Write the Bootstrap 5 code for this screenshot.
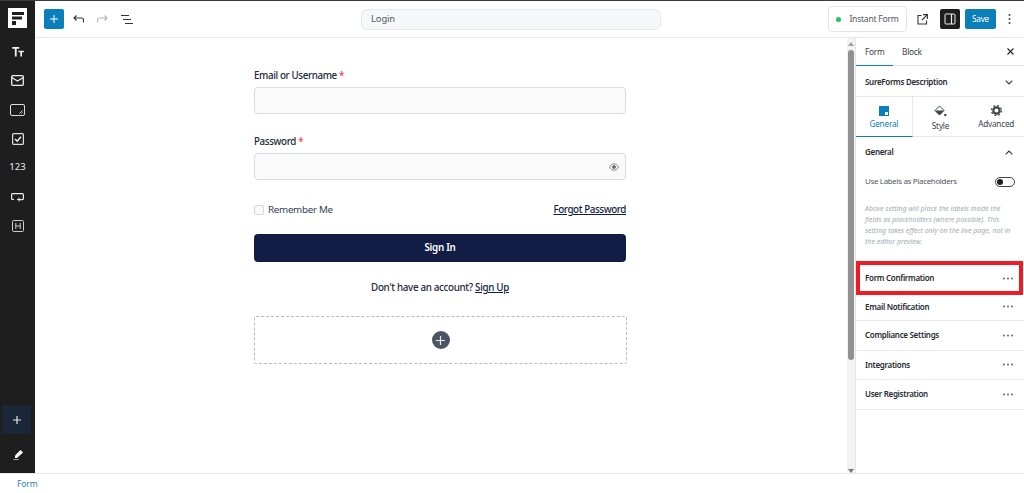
<!DOCTYPE html>
<html lang="en"><head><meta charset="utf-8"><title>Login</title>
<link href="https://cdn.jsdelivr.net/npm/bootstrap@5.3.0/dist/css/bootstrap.min.css" rel="stylesheet">
<style>
html,body{height:100%;overflow:hidden}
body{font-family:"Noto Sans","Open Sans",sans-serif;color:#1e1e1e;background:#fff;border-top:1px solid #3c3c3c}
.app{height:472px}
.rail{width:35px;background:#1e1e1e;color:#e8e8e8;flex:none;padding-top:7px}
.logo{width:19px;height:20px;background:#fff;margin-bottom:9px}
.rail-ic{height:29px;width:35px}
.rail-num{font-size:9.5px;font-weight:500;color:#ddd}
.rail-add{width:29px;height:29px;background:#1a2739;margin:0 4px 7px 2px}
.rail-pen{height:28px;margin-bottom:4px}
.topbar{height:37px;border-bottom:1px solid #e8e8e8;padding:0 10px 0 9px}
.ins{width:20px;height:20px;background:#0a7fb9;border-radius:2px}
.title-box{width:300px;height:21px;background:#f6f7f9;border:1px solid #e6e8ec;border-radius:6px;font-size:9.4px;letter-spacing:-.1px;padding-left:9px;color:#50575e;margin-left:228px;margin-right:167px}
.instant{width:79px;height:26px;border:1px solid #e4e4e7;border-radius:4px;font-size:8.6px;letter-spacing:-.25px;color:#50575e}
.dot{width:5px;height:5px;border-radius:50%;background:#22c55e}
.side-btn{width:20px;height:20px;background:#1e1e1e;border-radius:2px}
.save{width:31px;height:20px;background:#0a7fb9;color:#fff;font-size:8.2px;letter-spacing:-.2px;border-radius:2px}
.canvas-col{width:812px;flex:none}
.form-wrap{width:372px;margin-left:219px;padding-top:30px}
.lbl{font-size:9.8px;letter-spacing:-.38px;font-weight:500;color:#1e293b;line-height:15px;margin-bottom:4px}
.req{color:#e5484d}
.inp{height:27px;background:#fafafa;border:1px solid #d9dce1;border-radius:4px;margin-bottom:20px;padding-right:6px}
.opts{padding-top:2px}
.rem{font-size:9.8px;letter-spacing:-.3px;color:#334155;line-height:15px}
.chk{width:10px;height:10px;border:1px solid #d4d7dc;border-radius:2px;background:#fafafa}
.linkish{color:#111d45;text-decoration:underline}
.forgot{font-size:9.8px;letter-spacing:-.4px;font-weight:500;line-height:15px}
.signin{height:28px;background:#111d45;color:#fff;font-size:9.8px;letter-spacing:-.25px;font-weight:600;border-radius:4px;margin:17px 0 18px}
.acct{font-size:9.8px;letter-spacing:-.32px;font-weight:500;line-height:15px;color:#1e293b;margin-bottom:21px}
.adder{width:373px;height:48px;border:1px dashed #bbb;border-radius:2px}
.adder-c{width:18px;height:18px;background:#4b5563;border-radius:50%}
.sb{width:8px;flex:none;background:#f3f3f3}
.sb-up,.sb-down{width:0;height:0;border-left:3.5px solid transparent;border-right:3.5px solid transparent;margin-left:.5px}
.sb-up{border-bottom:4px solid #a3a3a3;margin-top:4px;margin-bottom:4px}
.sb-down{border-top:4px solid #777}
.sb-thumb{width:6px;height:310px;background:#919191;border-radius:3px;margin-left:1px}
.panel{width:169px;flex:none;border-left:1px solid #e5e5e5}
.ptabs{height:28px;font-size:8.3px;letter-spacing:-.25px;color:#3c434a;border-bottom:1px solid #e5e5e5;padding-right:10px}
.ptab{height:27px;line-height:27px;padding-left:9px}
.ptab.on{border-bottom:1px solid #0a7fb9;width:37px;flex:none;height:28px}
.sec{font-size:8px;letter-spacing:-.3px;font-weight:600;color:#272b30;padding:0 11px 0 9px;border-bottom:1px solid #e9e9e9}
.desc{height:31px;padding-top:2px}
.tri{height:40px;border-bottom:1px solid #e9e9e9;font-size:8.2px;letter-spacing:-.2px;color:#3c434a}
.tri-i{flex:1;line-height:11px;padding-top:9px}
.tri-i.on{color:#0a7fb9;border-bottom:1px solid #0a7fb9;border-right:1px solid #e9e9e9;height:40px}
.tri-t{margin-top:2px}
.gen{height:29px;border:0;padding-top:1px}
.toggle-row{font-size:7.9px;letter-spacing:-.3px;color:#50575e;padding:0 9px;height:32px}
.tog{width:20px;height:10px;border:1px solid #444;border-radius:5px;padding:1px}
.tog i{display:block;width:6px;height:6px;border-radius:50%;background:#1e1e1e}
.hint{font-size:7px;line-height:11px;font-style:italic;color:#a3abb5;padding:5px 8px 0 9px;height:63px}
.fc{height:34px;outline:4.5px solid #ed1c24;outline-offset:-4.5px;margin-right:1px;padding:0 10px 0 9px;border:0}
.first-row{height:26px;padding-bottom:2px}
.rowi{height:29.5px}
.foot{height:20px;border-top:1px solid #e8e8e8;font-size:8.5px;letter-spacing:-.1px;color:#2b7fb5;padding:2px 0 0 17px}
</style></head><body>
<svg width="0" height="0" class="d-block"><defs><g id="dots3" fill="#555"><circle cx="1" cy="1.500" r=".9"/><circle cx="5" cy="1.500" r=".9"/><circle cx="9" cy="1.500" r=".9"/></g></defs></svg>
<div class="app d-flex">
<aside class="rail d-flex flex-column align-items-center">
<div class="logo d-flex align-items-center justify-content-center"><svg width="14" height="15" viewBox="0 0 14 15"><path d="M1 1h12v3H1zM1 5.500h10v3H1zM1 10h4v4H1z" fill="#1e1e1e"/></svg></div>
<div class="rail-ic d-flex align-items-center justify-content-center"><svg width="12" height="10" viewBox="0 0 14 12" fill="#eee"><path d="M0 0h8.500v2H5.400v9.500H3.200V2H0zM7.500 4.500H14v1.700h-2.200v5.300H9.800V6.200H7.500z"/></svg></div>
<div class="rail-ic d-flex align-items-center justify-content-center"><svg width="13" height="11" viewBox="0 0 13 11" fill="none" stroke="#eee" stroke-width="1.300"><rect x=".7" y=".7" width="11.600" height="9.600" rx="1"/><path d="M.7 2.500l5.800 3.500 5.800-3.500"/></svg></div>
<div class="rail-ic d-flex align-items-center justify-content-center"><svg width="15" height="12" viewBox="0 0 15 12" fill="none" stroke="#ddd" stroke-width="1"><rect x=".5" y=".5" width="14" height="11" rx="1.500"/><path d="M9.500 9.500l3-3M11.500 9.500l1-1"/></svg></div>
<div class="rail-ic d-flex align-items-center justify-content-center"><svg width="12" height="12" viewBox="0 0 12 12" fill="none" stroke="#ddd"><rect x=".6" y=".6" width="10.800" height="10.800" rx="1" stroke-width="1.200"/><path d="M3 6l2.200 2.200L9 3.800" stroke="#eee" stroke-width="1.500"/></svg></div>
<div class="rail-ic rail-num d-flex align-items-center justify-content-center">123</div>
<div class="rail-ic d-flex align-items-center justify-content-center"><svg width="13" height="10" viewBox="0 0 13 10" fill="none" stroke="#eee" stroke-width="1.200"><path d="M3 7.500H1.600A1 1 0 0 1 .6 6.500V2.600a1 1 0 0 1 1-1h9.800a1 1 0 0 1 1 1v4a1 1 0 0 1-1 1H9"/><path d="M6 7.500h4M8 5.500v4" stroke-width="1"/></svg></div>
<div class="rail-ic d-flex align-items-center justify-content-center"><svg width="12" height="12" viewBox="0 0 12 12" fill="none" stroke="#ccc"><rect x=".5" y=".5" width="11" height="11" rx="1"/><path d="M3.800 3v6M8.200 3v6M3.800 6h4.400"/></svg></div>
<div class="mt-auto rail-add d-flex align-items-center justify-content-center"><svg width="8" height="8" viewBox="0 0 8 8" stroke="#e5e5e5" stroke-width="1.200"><path d="M4 0v8M0 4h8"/></svg></div>
<div class="rail-pen d-flex align-items-center justify-content-center"><svg width="10" height="10" viewBox="0 0 10 10"><path d="M2 5.500L7.500 0 10 2.500 4 8H2z" fill="#fff"/><path d="M.5 9.500h5" stroke="#aaa" stroke-width="1"/></svg></div>
</aside>
<div class="flex-grow-1 d-flex flex-column" style="min-width:0">
<header class="topbar d-flex align-items-center">
<div class="ins d-flex align-items-center justify-content-center"><svg width="8" height="8" viewBox="0 0 8 8" stroke="#fff" stroke-width="1"><path d="M4 0v8M0 4h8"/></svg></div>
<svg width="11" height="8" viewBox="0 0 11 8" fill="none" stroke="#333" stroke-width="1.100" style="margin-left:9px"><path d="M10.500 7.500V5a2 2 0 0 0-2-2H1M3.500.5L1 3l2.500 2.500"/></svg>
<svg width="11" height="8" viewBox="0 0 11 8" fill="none" stroke="#b5b5b5" stroke-width="1.100" style="margin-left:13px"><path d="M.5 7.500V5a2 2 0 0 1 2-2H10M7.500.5L10 3 7.500 5.500"/></svg>
<svg width="12" height="9" viewBox="0 0 12 9" stroke="#333" stroke-width="1" style="margin-left:13px"><path d="M0 .5h8M2 4.500h8M4 8.500h8"/></svg>
<div class="title-box d-flex align-items-center">Login</div>
<div class="instant d-flex align-items-center justify-content-center gap-2"><span class="dot"></span><span>Instant Form</span></div>
<svg width="11" height="11" viewBox="0 0 11 11" fill="none" stroke="#333" stroke-width="1.100" style="margin-left:10px"><path d="M4.500 1.500H1v8.500h8.500V6.500M6 .6h4.400V5M10.400.6L5 6"/></svg>
<div class="side-btn d-flex align-items-center justify-content-center" style="margin-left:12px"><svg width="12" height="12" viewBox="0 0 12 12" fill="none" stroke="#eee"><rect x="1" y="1" width="10" height="10" rx="1"/><path d="M7.500 1v10" stroke-width="1.200"/></svg></div>
<div class="save d-flex align-items-center justify-content-center" style="margin-left:5px">Save</div>
<svg width="3" height="10" viewBox="0 0 3 10" fill="#444" style="margin-left:12px"><circle cx="1.500" cy="1" r="1"/><circle cx="1.500" cy="5" r="1"/><circle cx="1.500" cy="9" r="1"/></svg>
</header>
<div class="d-flex flex-grow-1" style="min-height:0">
<main class="canvas-col">
<div class="form-wrap">
<div class="lbl">Email or Username <span class="req">*</span></div>
<div class="inp"></div>
<div class="lbl">Password <span class="req">*</span></div>
<div class="inp d-flex align-items-center justify-content-end"><svg width="10" height="8" viewBox="0 0 10 8" fill="none" stroke="#666" stroke-width=".8"><path d="M.5 4C2 1.500 3.500.8 5 .8S8 1.500 9.500 4C8 6.500 6.500 7.200 5 7.200S2 6.500.5 4z"/><circle cx="5" cy="4" r="1.500" fill="#666"/></svg></div>
<div class="opts d-flex justify-content-between align-items-center">
<div class="rem d-flex align-items-center gap-1"><span class="chk"></span><span>Remember Me</span></div>
<span class="forgot linkish">Forgot Password</span></div>
<div class="signin d-flex align-items-center justify-content-center">Sign In</div>
<div class="acct text-center">Don't have an account? <span class="linkish">Sign Up</span></div>
<div class="adder d-flex align-items-center justify-content-center"><span class="adder-c d-flex align-items-center justify-content-center"><svg width="9" height="9" viewBox="0 0 9 9" stroke="#e5e7eb" stroke-width="1.200"><path d="M4.500 0v9M0 4.500h9"/></svg></span></div>
</div>
</main>
<div class="sb d-flex flex-column"><div class="sb-up"></div><div class="sb-thumb"></div><div class="sb-down mt-auto"></div></div>
<aside class="panel">
<div class="ptabs d-flex align-items-center"><div class="ptab on">Form</div><div class="ptab">Block</div><svg class="ms-auto" width="7" height="7" viewBox="0 0 7 7" stroke="#222" stroke-width="1.100"><path d="M.5.5l6 6M6.500.5l-6 6"/></svg></div>
<div class="sec desc d-flex align-items-center justify-content-between">SureForms Description<svg width="8" height="5" viewBox="0 0 8 5" fill="none" stroke="#333" stroke-width="1.100"><path d="M.7.7L4 4l3.300-3.300"/></svg></div>
<div class="tri d-flex text-center">
<div class="tri-i on"><svg class="d-block mx-auto" width="10" height="10" viewBox="0 0 10 10"><path fill="#0a7fb9" d="M0 0h10v10H0z"/><path fill="#fff" d="M6 6h3v3H6z"/></svg><div class="tri-t">General</div></div>
<div class="tri-i" style="padding-top:8px"><svg class="d-block mx-auto" width="13" height="12" viewBox="0 0 13 12"><path fill="none" stroke="#3c434a" d="M5.500 1L10 5.500 5.500 10 1 5.500z"/><path fill="#3c434a" d="M1 5.500h9L5.500 10z"/><circle cx="11.300" cy="10" r="1.200" fill="#3c434a"/></svg><div style="margin-top:3px">Style</div></div>
<div class="tri-i"><svg class="d-block mx-auto" width="11" height="11" viewBox="0 0 11 11" style="margin-top:-1px"><circle cx="5.500" cy="5.500" r="3.200" fill="none" stroke="#3c434a" stroke-width="2.200"/><circle cx="5.500" cy="5.500" r="5" fill="none" stroke="#3c434a" stroke-width="1.200" stroke-dasharray="2 1.930"/></svg><div class="tri-t">Advanced</div></div>
</div>
<div class="sec gen d-flex align-items-center justify-content-between">General<svg width="8" height="5" viewBox="0 0 8 5" fill="none" stroke="#333" stroke-width="1.100"><path d="M.7 4.300L4 1l3.300 3.300"/></svg></div>
<div class="toggle-row d-flex align-items-center justify-content-between"><span>Use Labels as Placeholders</span><span class="tog d-block"><i></i></span></div>
<div class="hint">Above setting will place the labels inside the fields as placeholders (where possible). This setting takes effect only on the live page, not in the editor preview.</div>
<div class="sec fc d-flex align-items-center justify-content-between"><span>Form Confirmation</span><svg width="10" height="3"><use href="#dots3"/></svg></div>
<div class="sec first-row d-flex align-items-center justify-content-between"><span>Email Notification</span><svg width="10" height="3"><use href="#dots3"/></svg></div>
<div class="sec rowi d-flex align-items-center justify-content-between"><span>Compliance Settings</span><svg width="10" height="3"><use href="#dots3"/></svg></div>
<div class="sec rowi d-flex align-items-center justify-content-between"><span>Integrations</span><svg width="10" height="3"><use href="#dots3"/></svg></div>
<div class="sec rowi d-flex align-items-center justify-content-between"><span>User Registration</span><svg width="10" height="3"><use href="#dots3"/></svg></div>
</aside>
</div>
</div>
</div>
<div class="foot d-flex align-items-center">Form</div>
</body></html>
